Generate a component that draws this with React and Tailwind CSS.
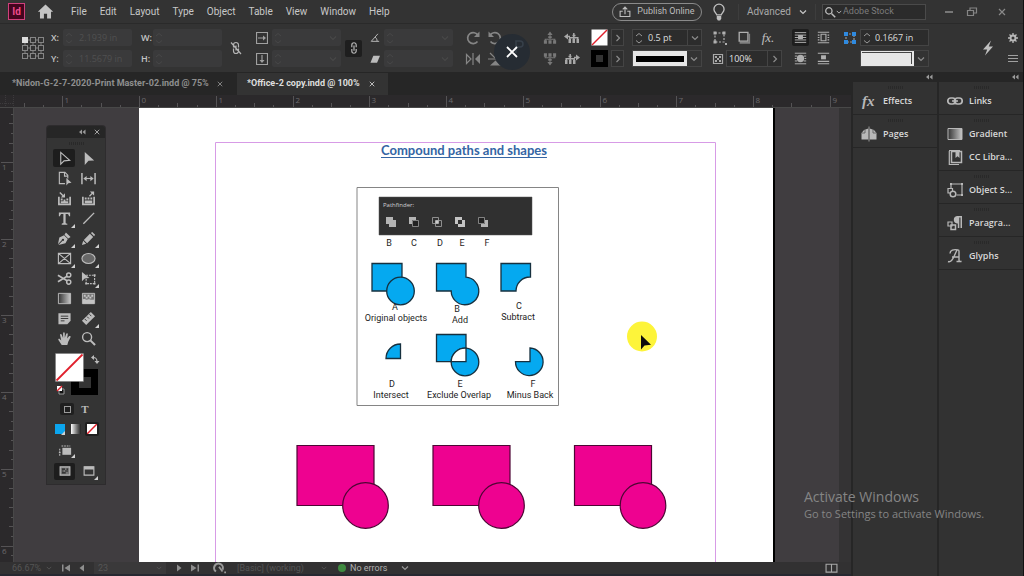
import React from 'react';

const LINE = { fill: 'none', stroke: 'currentColor', strokeWidth: 1.2 };

function Icon({ children, className = 'size-4 text-[#b4b4b4]', box = 16 }) {
  return (
    <svg viewBox={`0 0 ${box} ${box}`} className={`block shrink-0 ${className}`} aria-hidden="true">
      {children}
    </svg>
  );
}

const Chevron = ({ className = 'size-2 text-[#8c8c8c]' }) => (
  <Icon box={8} className={className}><path d="M1 2.5 4 5.5 7 2.5" {...LINE} /></Icon>
);
const ChevronRight = () => (
  <Icon box={8} className="size-2 text-[#8c8c8c]"><path d="M2.5 1 5.5 4 2.5 7" {...LINE} /></Icon>
);
const Spinner = ({ className }) => (
  <Icon box={12} className={`size-3 ${className}`}><path d="M3 4 6 1.5 9 4M3 8.5 6 11 9 8.5" {...LINE} strokeWidth="1" /></Icon>
);
const DoubleLeft = () => (
  <Icon box={8} className="size-2 text-[#9a9a9a]"><path d="M4 1.5 1 4l3 2.500zM7.500 1.500 4.500 4l3 2.500z" fill="currentColor" /></Icon>
);
const CloseX = ({ className }) => (
  <Icon box={8} className={className}><path d="M1 1 7 7M7 1 1 7" {...LINE} /></Icon>
);
const Grip = () => (
  <div className="flex h-[7px] items-center justify-center gap-px pt-1" aria-hidden="true">
    {[0, 1, 2, 3, 4, 5, 6, 7].map((n) => <span key={n} className="h-[3px] w-px bg-[#292929]" />)}
  </div>
);

/* ---------- menu bar ---------- */

const MENUS = ['File', 'Edit', 'Layout', 'Type', 'Object', 'Table', 'View', 'Window', 'Help'];

function MenuBar() {
  return (
    <header className="flex h-6 shrink-0 items-center border-b border-[#2a2a2a] bg-[#333333] pl-2 font-['Roboto',sans-serif] text-[10px] text-[#c8c8c8]">
      <div className="flex h-[17px] w-[17px] items-center justify-center border border-[#d0407c] bg-[#45041f] text-[10px] font-bold leading-none text-[#f04c8c]">Id</div>
      <button aria-label="Home" className="ml-3">
        <Icon className="size-[17px] text-[#c4c4c4]"><path d="M8 1.500.8 8.300h2V14.500h3.700V10h3v4.500h3.700V8.300h2z" fill="currentColor" /></Icon>
      </button>
      <nav className="ml-[17px] flex gap-[13px]">
        {MENUS.map((m) => <button key={m}>{m}</button>)}
      </nav>
      <div className="ml-auto flex items-center">
        <button className="flex h-[18px] w-[90px] items-center justify-center gap-[6px] rounded-full border border-[#8a8a8a] text-[9px] text-[#bdbdbd]">
          <Icon className="size-3 text-[#bdbdbd]"><path d="M5 7H1.500v7h13V7H11M8 11V1.500M5 4.500l3-3 3 3" {...LINE} strokeWidth="1.500" /></Icon>
          Publish Online
        </button>
        <button aria-label="Learn" className="ml-2">
          <Icon className="size-[18px] text-[#c0c0c0]"><path d="M6 10.500C5.500 8.800 3.500 8 3.500 5.500a4.500 4.500 0 0 1 9 0c0 2.500-2 3.300-2.500 5z" {...LINE} /><path d="M6 11.500h4v2.500l-1 1.500H7L6 14z" fill="currentColor" /></Icon>
        </button>
        <span className="ml-[10px] h-4 w-px bg-[#3d3d3d]" />
        <button className="ml-2 flex items-center gap-2 text-[#a8a8a8]">Advanced <Chevron className="size-2 text-[#c8c8c8]" /></button>
        <span className="ml-2 h-4 w-px bg-[#3d3d3d]" />
        <label className="ml-[6px] flex h-4 w-[104px] items-center border border-[#4a4a4a] bg-[#2b2b2b] pl-px">
          <Icon className="size-3 text-[#bdbdbd]"><circle cx="6.500" cy="6.500" r="4.200" {...LINE} strokeWidth="1.700" /><path d="m10 10 5 5" {...LINE} strokeWidth="2" /></Icon>
          <Chevron className="size-[6px] text-[#bdbdbd]" />
          <input aria-label="Search Adobe Stock" placeholder="Adobe Stock" className="ml-px min-w-0 flex-1 bg-transparent text-[9px] outline-none placeholder:text-[#7c7c7c]" />
        </label>
        <button aria-label="Minimize" className="ml-4 flex h-4 w-[14px] items-center"><span className="mx-auto h-[2px] w-2 bg-[#777777]" /></button>
        <button aria-label="Restore" className="ml-[10px]">
          <Icon box={12} className="h-4 w-3 text-[#858585]"><path d="M1.500 4.500h6v5h-6zM4 4.500V2h6.500v5H8" {...LINE} /></Icon>
        </button>
        <button aria-label="Close window" className="ml-4 mr-[13px] flex h-4 w-4 items-center justify-center"><CloseX className="size-2 text-[#8a8a8a]" /></button>
      </div>
    </header>
  );
}

/* ---------- control bar ---------- */

function NumField({ label, showLabel, value = '', icon, menu }) {
  return (
    <label className="flex h-[17px] items-center">
      {showLabel && <span className="w-3 text-[9px] font-semibold text-[#c4c4c4]">{label}:</span>}
      {icon && <span className="mr-1">{icon}</span>}
      <span className="flex h-full w-[69px] items-center rounded-[2px] bg-[#3a3a3b]">
        <Spinner className="text-[#474747]" />
        <input aria-label={label} defaultValue={value} className="ml-1 w-0 min-w-0 flex-1 bg-transparent text-[9px] text-[#505050] outline-none" />
        {menu && <Chevron className="mr-1 size-2 text-[#484848]" />}
      </span>
    </label>
  );
}

const Pair = ({ className = '', children }) => (
  <div className={`flex shrink-0 flex-col gap-1 ${className}`}>{children}</div>
);
const Tool = ({ label, className = 'w-4', children }) => (
  <button aria-label={label} className={`flex h-[17px] items-center justify-center ${className}`}>{children}</button>
);
const FlyButton = ({ label }) => (
  <button aria-label={label} className="flex h-[17px] w-[13px] items-center justify-center border border-[#444444] bg-[#2e2e2e]"><ChevronRight /></button>
);

const Tree = ({ turn }) => (
  <g transform={turn}>
    <path d="M8 10V3M2.500 13V9.500h11V13" {...LINE} />
    <path d="M5 4.500 8 .5l3 4zM6 6h4v2H6z" fill="currentColor" />
    <path d="M1 10.500h3.500v4H1zM6.200 10.500h3.600v4H6.200zM11.500 10.500H15v4h-3.500z" fill="currentColor" />
  </g>
);
const SideTree = ({ turn }) => (
  <g transform={turn}>
    <path d="M0 6.500 4 3.500v6zM4.500 9h2.500v4H4.500zM8.500 9H11v4H8.500zM12.500 9H15v4h-2.500z" fill="currentColor" />
    <path d="M3 6.500h3M5.800 10V7.800h8V10M9.800 10V3M8.500 5.500h3" {...LINE} strokeWidth="1.500" />
  </g>
);

function ControlBar() {
  return (
    <section aria-label="Control" className="flex h-12 shrink-0 items-center overflow-hidden bg-[#333333] pl-[22px]">
      <Icon box={22} className="size-[22px] text-[#808080]">
        <path d="M3 3h16v16H3zM3 11h16M11 3v16" {...LINE} strokeWidth="1" />
        {[0, 8, 16].map((y) => [0, 8, 16].map((x) => (
          <rect key={`${x}-${y}`} x={x + 0.5} y={y + 0.5} width="5" height="5" fill={x + y ? '#333333' : '#dddddd'} stroke={x + y ? '#858585' : '#dddddd'} />
        )))}
      </Icon>
      <Pair className="ml-[7px]">
        <NumField label="X" showLabel value="2.1939 in" />
        <NumField label="Y" showLabel value="11.5679 in" />
      </Pair>
      <Pair className="ml-[9px]">
        <NumField label="W" showLabel />
        <NumField label="H" showLabel />
      </Pair>
      <button aria-label="Constrain proportions" className="ml-[6px]">
        <Icon><path d="M5.500 7.500V5a2.500 2.500 0 0 1 5 0v2.500M5.500 8.500V11a2.500 2.500 0 0 0 5 0V8.500M8 5.500v5M3 2.500l10 11.500" {...LINE} /></Icon>
      </button>
      <Pair className="ml-3">
        <NumField label="Scale X" menu icon={<Icon box={12} className="size-3 text-[#a0a0a0]"><path d="M.5.5h11v11H.5zM2 6h6" {...LINE} /><path d="M7 3.500 10 6 7 8.500z" fill="currentColor" /></Icon>} />
        <NumField label="Scale Y" menu icon={<Icon box={12} className="size-3 text-[#a0a0a0]"><path d="M.5.5h11v11H.5zM6 2v6" {...LINE} /><path d="M3.500 7 6 10 8.500 7z" fill="currentColor" /></Icon>} />
      </Pair>
      <button aria-label="Link scale" className="ml-1 flex h-[17px] w-[17px] items-center justify-center rounded-[2px] bg-[#1e1e1e]">
        <Icon className="size-[14px] text-[#b4b4b4]"><path d="M5.500 7V4.500a2.500 2.500 0 0 1 5 0V7M5.500 9v2.500a2.500 2.500 0 0 0 5 0V9M8 5v6" {...LINE} strokeWidth="1.400" /></Icon>
      </button>
      <Pair className="ml-2">
        <NumField label="Rotation angle" menu icon={<Icon box={12} className="size-[10px] text-[#b4b4b4]"><path d="M9.500 1 1.500 10H11M6 5c1.800 1 2.500 2.500 2.500 5" {...LINE} /></Icon>} />
        <NumField label="Shear angle" menu icon={<Icon box={12} className="size-[10px] text-[#bcbcbc]"><path d="M4 2h8L8.500 10.500h-8z" fill="currentColor" /></Icon>} />
      </Pair>
      <Pair className="ml-3">
        <Tool label="Rotate clockwise"><Icon className="size-4 text-[#858585]"><path d="M12.500 11.500a5.500 5.500 0 1 1 .5-6" {...LINE} strokeWidth="1.700" /><path d="M14.500 1.500V7H9z" fill="currentColor" /></Icon></Tool>
        <Tool label="Flip horizontal"><Icon className="size-4 text-[#858585]"><path d="M1.500 3.500 6 8l-4.500 4.500zM8 2v12" {...LINE} /><path d="M15 3v10L10 8z" fill="currentColor" /></Icon></Tool>
      </Pair>
      <Pair className="ml-[6px]">
        <Tool label="Rotate counterclockwise"><Icon className="size-4 text-[#858585]"><path d="M3.500 11.500a5.500 5.500 0 1 0-.5-6" {...LINE} strokeWidth="1.700" /><path d="M1.500 1.500V7H7z" fill="currentColor" /></Icon></Tool>
        <Tool label="Flip vertical"><Icon className="size-4 text-[#858585]"><path d="M3 2l4.500 4.500L13 2M1 8h14" {...LINE} /><path d="M3 14.500h11L8.500 9.500z" fill="currentColor" /></Icon></Tool>
      </Pair>
      <button aria-label="Dismiss" className="-ml-[9px] mt-2 flex h-9 w-9 shrink-0 items-center justify-center rounded-full bg-[#262c33]">
        <Icon box={36} className="size-9 text-white"><path d="M22 19V7h4a3 3 0 0 1 0 6h-4" fill="none" stroke="#37404a" strokeWidth="1.500" /><path d="M13 13l10 10M23 13 13 23" {...LINE} strokeWidth="1.800" /></Icon>
      </button>
      <Pair className="ml-3">
        <Tool label="Select container"><Icon className="size-[14px] text-[#787878]"><Tree /></Icon></Tool>
        <Tool label="Select content"><Icon className="size-[14px] text-[#787878]"><Tree turn="rotate(180 8 8)" /></Icon></Tool>
      </Pair>
      <Pair className="ml-[6px]">
        <Tool label="Previous object"><Icon className="size-4 text-[#a8a8a8]"><SideTree /></Icon></Tool>
        <Tool label="Next object"><Icon className="size-4 text-[#a8a8a8]"><SideTree turn="matrix(-1 0 0 1 16 0)" /></Icon></Tool>
      </Pair>
      <Pair className="ml-[11px]">
        <div className="flex gap-[3px]">
          <button aria-label="Fill none"><Icon box={17} className="size-[17px]"><path d="M.5.5h16v16H.5z" fill="#fff" /><path d="M1 16 16 1" stroke="#e0202c" strokeWidth="1.500" /></Icon></button>
          <FlyButton label="Fill options" />
        </div>
        <div className="flex gap-[3px]">
          <button aria-label="Stroke black" className="flex h-[17px] w-[17px] items-center justify-center bg-black"><span className="size-[7px] bg-[#333333]" /></button>
          <FlyButton label="Stroke options" />
        </div>
      </Pair>
      <Pair className="ml-2">
        <label className="flex h-[17px] w-[70px] items-center border border-[#444444] bg-[#2c2c2c]">
          <Spinner className="text-[#999999]" />
          <input aria-label="Stroke weight" defaultValue="0.5 pt" className="ml-[3px] w-0 flex-1 bg-transparent text-[9px] text-[#dddddd] outline-none" />
          <span className="flex h-full w-[14px] items-center justify-center border-l border-[#444444]"><Chevron /></span>
        </label>
        <button aria-label="Stroke type" className="flex h-[17px] w-[70px] border border-[#444444]">
          <span className="flex h-full flex-1 items-center bg-[#e6e6e6] px-[3px]"><span className="h-[6px] w-full bg-black" /></span>
          <span className="flex h-full w-[14px] items-center justify-center"><Chevron /></span>
        </button>
      </Pair>
      <div className="ml-[10px] flex shrink-0 flex-col gap-1">
        <div className="flex items-center gap-2">
          <Tool label="Corner options"><Icon className="size-4 text-[#b0b0b0]"><path d="M3 3h9v9H3z" {...LINE} strokeDasharray="2 1.500" /><path d="M1.500 1.500h3v3h-3zM10.500 1.500h3v3h-3zM1.500 10.500h3v3h-3zM13 13h2v2h-2z" fill="currentColor" /></Icon></Tool>
          <Tool label="Drop shadow"><Icon className="size-[14px] text-[#b0b0b0]"><path d="M2.500 1.500h10v10h-10z" {...LINE} strokeWidth="1.500" /><path d="M3 13.500h11V3" {...LINE} stroke="#808080" strokeWidth="2" /></Icon></Tool>
          <Tool label="Effects"><span className="font-['Liberation_Serif',serif] text-[13px] italic leading-none text-[#c0c0c0]">fx.</span></Tool>
        </div>
        <div className="flex items-center gap-px">
          <Icon box={12} className="mr-px size-3 text-[#a8a8a8]"><path d="M1.500 1.500h9v9h-9z" {...LINE} /><path d="M3 3h2v2H3zM7 3h2v2H7zM5 5h2v2H5zM3 7h2v2H3zM7 7h2v2H7z" fill="currentColor" /></Icon>
          <label className="flex h-[17px] w-[56px] items-center border border-[#444444] bg-[#2c2c2c]">
            <input aria-label="Opacity" defaultValue="100%" className="ml-[2px] w-0 flex-1 bg-transparent text-[9px] text-[#e2e2e2] outline-none" />
            <span className="flex h-full w-[14px] items-center justify-center border-l border-[#444444]"><ChevronRight /></span>
          </label>
        </div>
      </div>
      <Pair className="ml-[10px]">
        <Tool label="No text wrap" className="w-[17px] rounded-[2px] bg-[#1e1e1e]"><Icon className="size-[13px] text-[#b0b0b0]"><path d="M1 2h14M1 5h14M1 8h14M1 11h14M1 14h14" {...LINE} /><path d="M5 5h6v5H5z" fill="currentColor" /></Icon></Tool>
        <Tool label="Wrap around shape" className="w-[17px]"><Icon className="size-[13px] text-[#b0b0b0]"><path d="M1 1.500h14M1 5h3M12 5h3M1 8h2M13 8h2M1 11h3M12 11h3M1 14.500h14" {...LINE} /><circle cx="8" cy="8" r="4.500" fill="currentColor" /></Icon></Tool>
      </Pair>
      <Pair className="ml-[6px]">
        <Tool label="Wrap bounding box" className="w-[17px]"><Icon className="size-[13px] text-[#b0b0b0]"><path d="M1 1.500h14M1 5h2M13 5h2M1 8h2M13 8h2M1 11h2M13 11h2M1 14.500h14M5 4h6v8H5z" {...LINE} strokeWidth="1.400" /></Icon></Tool>
        <Tool label="Jump object" className="w-[17px]"><Icon className="size-[13px] text-[#b0b0b0]"><path d="M1 1.500h14M1 11.500h14M1 14.500h14" {...LINE} strokeWidth="1.400" /><path d="M5 4h6v5H5z" fill="currentColor" /></Icon></Tool>
      </Pair>
      <div className="ml-3 flex shrink-0 flex-col items-end gap-1">
        <label className="flex h-[17px] items-center gap-1">
          <Icon box={12} className="size-3 text-[#2f8ae0]"><path d="M2 2h8v8H2z" {...LINE} stroke="#999999" strokeDasharray="2 1" /><path d="M0 0h4v4H0zM8 0h4v4H8zM0 8h4v4H0zM8 8h4v4H8z" fill="currentColor" /></Icon>
          <span className="flex h-full w-[69px] items-center border border-[#444444] bg-[#2c2c2c]">
            <Spinner className="text-[#999999]" />
            <input aria-label="Corner size" defaultValue="0.1667 in" className="ml-[2px] w-0 flex-1 bg-transparent text-[9px] text-[#dddddd] outline-none" />
          </span>
        </label>
        <button aria-label="Corner shape" className="flex h-[17px] w-[69px] border border-[#444444]">
          <span className="h-full flex-1 bg-[#e6e6e6] p-px pr-[2px]"><span className="block h-3 border-r border-t border-[#444444]" /></span>
          <span className="flex h-full w-[14px] items-center justify-center"><Chevron /></span>
        </button>
      </div>
      <div className="ml-auto mr-[5px] flex items-center gap-3">
        <button aria-label="Quick apply"><Icon className="size-4 text-[#c0c0c0]"><path d="M11 .5 3 9.500h4.200L5 15.500l8-9H8.800z" fill="currentColor" /></Icon></button>
        <Pair>
          <Tool label="Settings" className="w-[10px]"><Icon box={12} className="size-[10px] text-[#b8b8b8]"><circle cx="6" cy="6" r="3" {...LINE} strokeWidth="2.200" /><path d="M6 0v12M0 6h12M1.800 1.800l8.400 8.400M10.200 1.800l-8.400 8.400" {...LINE} strokeWidth="1.600" /><circle cx="6" cy="6" r="1.800" fill="#333333" /></Icon></Tool>
          <Tool label="Panel menu" className="w-[10px]"><Icon box={10} className="size-[10px] text-[#a0a0a0]"><path d="M0 1.500h10M0 4.500h10M0 7.500h10" {...LINE} strokeWidth="1" /></Icon></Tool>
        </Pair>
      </div>
    </section>
  );
}

/* ---------- rulers and document tabs ---------- */

const INCH = 76.75;

function DocumentTabs() {
  return (
    <div className="flex h-[23px] shrink-0 items-stretch whitespace-nowrap bg-[#262626] pt-px font-['Roboto',sans-serif] text-[9px] font-bold">
      <div className="flex w-[237px] shrink-0 items-center justify-between pl-3 pr-[14px] text-[#8f8f8f]">
        <button>*Nidon-G-2-7-2020-Print Master-02.indd @ 75%</button>
        <button aria-label="Close Nidon tab"><CloseX className="size-[6px] text-[#8a8a8a]" /></button>
      </div>
      <div className="flex w-[151px] shrink-0 items-center justify-between bg-[#333333] pl-[10px] pr-[13px] text-[#dedede]">
        <button>*Office-2 copy.indd @ 100%</button>
        <button aria-label="Close Office tab"><CloseX className="size-[6px] text-[#c8c8c8]" /></button>
      </div>
    </div>
  );
}

function HorizontalRuler() {
  const ticks = [];
  for (let q = -6; q <= 36; q += 1) {
    const x = Math.round(139 + (q * INCH) / 4) + 0.5;
    const len = q % 4 === 0 ? 12 : q % 2 === 0 ? 5 : 3;
    ticks.push(<path key={q} d={`M${x} ${13 - len}V13`} stroke="#555355" />);
    if (q % 4 === 0) ticks.push(<text key={`t${q}`} x={x + 2} y="8" fontSize="8" fill="#6c6a6c">{Math.abs(q / 4)}</text>);
  }
  return (
    <div className="h-[13px] shrink-0 overflow-hidden border-b border-[#484848] bg-[#2b292b]">
      <svg width="840" height="13" className="block" aria-hidden="true">
        <path d="M13.500 0V13M0 8.500H13M5.500 0V13" stroke="#3c3a3c" strokeDasharray="1 1" />
        {ticks}
      </svg>
    </div>
  );
}

function VerticalRuler() {
  const ticks = [];
  for (let e = 3; e <= 49; e += 1) {
    const y = Math.round(-23 + (e * INCH) / 8) + 0.5;
    const len = e % 8 === 0 ? 12 : e % 2 === 0 ? 4 : 2;
    ticks.push(<path key={e} d={`M${13 - len} ${y}H13`} stroke="#555355" />);
    if (e % 8 === 0) ticks.push(<text key={`t${e}`} x="2" y={y + 7} fontSize="8" fill="#6c6a6c">{e / 8}</text>);
  }
  return (
    <div className="w-[14px] shrink-0 overflow-hidden border-r border-[#484848] bg-[#2b292b]">
      <svg width="13" height="454" className="block" aria-hidden="true">{ticks}</svg>
    </div>
  );
}

/* ---------- tools panel ---------- */

const Corner = () => (
  <Icon box={4} className="absolute -bottom-px right-0 size-1 text-[#d0d0d0]"><path d="M4 0v4H0z" fill="currentColor" /></Icon>
);

const TOOLS = [
  ['Selection', false, <path d="M4 1.500v12.500l3.500-3.500 6-.5z" {...LINE} />],
  ['Direct selection', false, <path d="M4 1v14l4-4.500 6-.5z" fill="currentColor" />],
  ['Page', false, <><path d="M8.500 13.500H2.500v-12h6l3 3V8M8 2v3.500h3.500" {...LINE} /><path d="M10 7.500v8l2-2.500 3.500-.5z" fill="currentColor" /></>],
  ['Gap', false, <><path d="M1 2v12M15 2v12" {...LINE} strokeWidth="1.600" /><path d="M4 8h8" {...LINE} /><path d="M2.500 8 6 5.200v5.600zM13.500 8 10 5.200v5.600z" fill="currentColor" /></>],
  ['Content collector', false, <><path d="M2 6v8.200h12V6" {...LINE} strokeWidth="1.800" /><path d="M4 8h2v2H4zM10 8h2v2h-2zM7 9h2v2H7zM4 11h8v2H4z" fill="currentColor" /><path d="m3 1.500 3.500 3.500" {...LINE} strokeWidth="1.500" /><path d="M8.500 2.500v4.500h-4.500z" fill="currentColor" /></>],
  ['Content placer', false, <><path d="M2 6v8.200h12V6" {...LINE} strokeWidth="1.800" /><path d="M4 7h2v2H4zM7 7h2v2H7zM10 7h2v2h-2zM4 10h8v3H4z" fill="currentColor" /><path d="m9 5.500 3.500-3.500" {...LINE} strokeWidth="1.500" /><path d="M9.500.5H14V5z" fill="currentColor" /></>],
  ['Type', true, <path d="M2 1.500h12V5.500h-1.200C12.500 4 12 3.300 10.500 3.300H9.200v9c0 1 .5 1.200 1.800 1.300v1H5v-1c1.300-.1 1.800-.3 1.800-1.300v-9H5.500C4 3.300 3.500 4 3.200 5.500H2z" fill="currentColor" />],
  ['Line', false, <path d="M2.500 13.500 14 2" {...LINE} strokeWidth="1.500" />],
  ['Pen', true, <path d="M9.500 1.500 14.500 6.500l-2.500 1.500-4-4zM7.500 4.500l4 4-2.500 4.500-7.500 2L6 10.500a1.200 1.200 0 1 0-.8-.8L1 14l1.500-7z" fill="currentColor" />],
  ['Pencil', true, <path d="m10.500 2 1.500-1 3 3-1 1.500zM9.500 3l3.500 3.500-6.500 6.500L3 9.500zM2.300 10.500l3.200 3.200L1 15z" fill="currentColor" />],
  ['Rectangle frame', true, <path d="M1.500 2.500h13v11h-13zM1.500 2.500l13 11M14.500 2.500l-13 11" {...LINE} />],
  ['Ellipse', true, <ellipse cx="8" cy="8" rx="7" ry="5.300" fill="#686868" stroke="currentColor" strokeWidth="1.200" />],
  ['Scissors', false, <><circle cx="12.500" cy="4.200" r="2.200" {...LINE} strokeWidth="1.600" /><circle cx="12.500" cy="11.800" r="2.200" {...LINE} strokeWidth="1.600" /><path d="M10.800 5.500 1 11.500M10.800 10.500 1 4.500" {...LINE} strokeWidth="1.800" /></>],
  ['Free transform', true, <><path d="M5.500 4.500h9v9h-9z" {...LINE} strokeDasharray="2 1" /><path d="M13.500 3.500h2v2h-2zM4.500 12.500h2v2h-2zM13.500 12.500h2v2h-2z" fill="currentColor" /><path d="M1 1v10l3-3 5-.5z" fill="currentColor" /></>],
  ['Gradient swatch', false, <path d="M1.500 2.500h13v11h-13z" fill="url(#grey-fade)" stroke="currentColor" />],
  ['Gradient feather', false, <><path d="M1.500 2.500h13v11h-13z" fill="#777777" stroke="currentColor" /><path d="M3 4h2v2H3zM7 4h2v2H7zM11 4h2v2h-2zM5 6h2v2H5zM9 6h2v2H9zM2 9c2-1.500 3 1 5 0s3 1 7 0v4.500H2z" fill="#c4c4c4" /></>],
  ['Note', false, <><path d="M1.500 2.500h13v8l-3.500 3.500H1.500z" fill="currentColor" /><path d="M4 5.500h8M4 8h8M4 10.500h4" stroke="#333333" /></>],
  ['Measure', true, <><path d="M10.500 1 15 5.500 5.500 15 1 10.500z" fill="currentColor" /><path d="m4 8.500 2 2M6.500 6l2 2M9 3.500l2 2" stroke="#333333" /></>],
  ['Hand', false, <path d="M5 15 1.500 9.500c-.5-1 .8-1.800 1.700-.8L4.500 10 3.300 4.500c-.3-1.300 1.400-1.700 1.800-.4L6.500 7.500V2.300c0-1.400 1.800-1.400 1.800 0V7.200L9.800 3c.4-1.200 2-.8 1.700.5L10.800 8l2-2.300c.9-1 2.200-.1 1.600 1L12 11.500 11 15z" fill="currentColor" />],
  ['Zoom', false, <><circle cx="6.500" cy="6.500" r="4.800" {...LINE} strokeWidth="1.500" /><path d="m10 10 5 5" {...LINE} strokeWidth="2.200" /></>],
];

function ToolsPanel() {
  return (
    <aside aria-label="Tools" className="absolute left-[33px] top-[18px] w-[58px] rounded-t-[3px] bg-[#343434] pb-1 text-[#bcbcbc] shadow-[0_0_0_1px_#2e2c2e]">
      <div className="flex h-3 items-center justify-end gap-2 rounded-t-[3px] bg-[#262626] pr-[5px]">
        <DoubleLeft /><CloseX className="size-[6px] text-[#b0b0b0]" />
      </div>
      <Grip />
      <div className="mt-[3px] grid grid-cols-2 px-[5px]">
        {TOOLS.map(([name, more, art], i) => (
          <div key={name} className="flex h-5 items-center justify-center">
            <button aria-label={name} className={i === 0 ? 'relative flex h-[18px] w-[22px] items-center justify-center rounded-[2px] bg-[#1d1d1d]' : 'relative flex h-[18px] w-[22px] items-center justify-center'}>
              <Icon className="size-[15px]">{art}</Icon>
              {more && <Corner />}
            </button>
          </div>
        ))}
      </div>
      <svg viewBox="0 0 58 46" className="mt-1 block w-full" role="img" aria-label="Fill none, stroke black">
        <path d="M24 17h27v26H24zM32 25v11h12V25z" fill="#000" fillRule="evenodd" />
        <path d="M8.500 1.500h28v28h-28z" fill="#fff" stroke="#777777" strokeWidth=".5" />
        <path d="m9.500 28.500 26-26" stroke="#e0202c" strokeWidth="1.800" />
        <path d="M46 5.500c3 0 4 1 4 4.500" fill="none" stroke="#bcbcbc" strokeWidth="1.200" />
        <path d="M47 3v5l-3-2.500zM47.500 9h5L50 12z" fill="#bcbcbc" />
        <path d="M12 37h5v5h-5z" fill="#111" stroke="#999999" />
        <path d="M10 34h5v5h-5z" fill="#fff" /><path d="m10 39 5-5" stroke="#e0202c" strokeWidth="1.500" />
      </svg>
      <div className="flex h-[22px] items-center gap-1 pl-[13px]">
        <button aria-label="Formatting affects container" className="flex h-3 w-[14px] items-center justify-center rounded-[2px] bg-[#1f1f1f]"><span className="size-[7px] border border-[#9a9a9a]" /></button>
        <button aria-label="Formatting affects text" className="w-[14px] font-['Liberation_Serif',serif] text-[11px] font-bold leading-none">T</button>
      </div>
      <div className="flex h-[18px] items-center gap-1 pl-2">
        <button aria-label="Apply color" className="relative size-[10px] bg-[#0ba5ee]"><Corner /></button>
        <button aria-label="Apply gradient" className="ml-[2px] size-[10px] bg-linear-to-r from-white to-[#222222]" />
        <button aria-label="Apply none" className="flex h-[14px] w-[14px] items-center justify-center rounded-[2px] bg-[#1f1f1f]"><Icon box={10} className="size-[10px]"><path d="M0 0h10v10H0z" fill="#fff" /><path d="M0 10 10 0" stroke="#e0202c" strokeWidth="1.500" /></Icon></button>
      </div>
      <div className="flex h-6 items-center pl-[11px]">
        <button aria-label="View options" className="relative flex h-[14px] w-[17px] items-center"><Icon className="size-[14px]"><path d="M5 5.500h10v8H5z" fill="currentColor" /><path d="M4 3.500h10M2 6.500v8M1 11h3" {...LINE} strokeDasharray="2 1" /></Icon><Corner /></button>
      </div>
      <div className="flex h-[18px] items-center gap-[5px] pl-[7px]">
        <button aria-label="Normal mode" className="flex h-[17px] w-[21px] items-center justify-center rounded-[2px] bg-[#1d1d1d]"><Icon className="size-3"><path d="M1.500 2.500h13v11h-13z" fill="#777777" stroke="currentColor" strokeWidth="1.500" /><path d="M4 5.500h4M10 5.500h2M4 8h2M8 8h4M4 10.500h5" stroke="#222222" strokeWidth="1.500" /></Icon></button>
        <button aria-label="Screen mode" className="relative flex h-[15px] w-[18px] items-center justify-center"><Icon className="size-3"><path d="M1.500 2.500h13v11h-13z" {...LINE} strokeWidth="1.500" /><path d="M1.500 2h13v4h-13z" fill="currentColor" /></Icon><Corner /></button>
      </div>
    </aside>
  );
}

/* ---------- artwork on the page ---------- */

const PATHFINDER = [
  [391, <path d="M0 0h7v3h3v7H3V7H0z" fill="#b4b4b4" />],
  [414, <><path d="M0 0h7v3H3v4H0z" fill="#b4b4b4" /><path d="M3.500 3.500h6v6h-6z" fill="#222" stroke="#999" strokeWidth=".8" /></>],
  [437, <><path d="M.5.5h6v6h-6zM3.500 3.500h6v6h-6z" fill="none" stroke="#999" strokeWidth=".9" /><path d="M3.500 3.500h3v3h-3z" fill="#ccc" /></>],
  [460, <path d="M0 0h7v3h3v7H3V7H0zM3 3v4h4V3z" fill="#c4c4c4" fillRule="evenodd" />],
  [483, <><path d="M10 3v7H3V7h4V3z" fill="#b4b4b4" /><path d="M.5.5h6v6h-6z" fill="#222" stroke="#999" strokeWidth=".8" /></>],
];

const LABELS = [
  ['B', 389, 246], ['C', 414, 246], ['D', 440, 246], ['E', 462, 246], ['F', 487, 246],
  ['A', 395, 310], ['Original objects', 396, 321],
  ['B', 457, 312], ['Add', 460, 323],
  ['C', 519, 309], ['Subtract', 518, 320],
  ['D', 392, 387], ['Intersect', 391, 398],
  ['E', 460, 387], ['Exclude Overlap', 459, 398],
  ['F', 533, 387], ['Minus Back', 530, 398],
];

function Artwork() {
  return (
    <svg viewBox="139 108 634 454" width="634" height="454" className="block" role="img" aria-label="Pathfinder operations and practice shapes">
      <path d="M215.500 562V142.500H715.500V562" fill="none" stroke="#d79be6" />
      <path d="M357 187.500h201.500v218H357z" fill="#fff" stroke="#858585" />
      <path d="M379 197h153v38H379z" fill="#303030" stroke="#555" strokeWidth=".5" />
      <text x="383" y="207" fontSize="6" fill="#d0d0d0">Pathfinder:</text>
      {PATHFINDER.map(([x, art]) => <g key={x} transform={`translate(${x - 5} 217)`}>{art}</g>)}
      <g fill="#05a9f0" stroke="#16303f" strokeWidth="1.300">
        <path d="M372 263.500h30V291h-30z" /><circle cx="400.500" cy="291" r="13.800" />
        <path d="M436.500 263.500H466v13.700a13.800 13.800 0 1 1-14.800 13.800H436.500z" />
        <path d="M501 263.500h29.500V277a14 14 0 0 0-14.500 14H501z" />
        <path d="M400.500 344v14.500H386A14.500 14.500 0 0 1 400.500 344z" />
        <path d="M436.500 334.500H466v27.200h-29.500z" /><circle cx="465" cy="362" r="13.800" />
        <path d="M466 348.200v13.500h-14.800A13.800 13.800 0 0 1 466 348.200z" fill="#fff" />
        <path d="M530 348v13.700H515.500A13.800 13.800 0 1 0 530 348z" />
      </g>
      <g fontSize="9" fill="#1d1d1d" textAnchor="middle" fontFamily="Roboto, sans-serif">
        {LABELS.map(([text, x, y]) => <text key={`${text}${y}`} x={x} y={y}>{text}</text>)}
      </g>
      <g fill="#ee0290" stroke="#4d0634" strokeWidth="1.200">
        {[297, 433, 574.5].map((x) => (
          <g key={x}><path d={`M${x} 445.500h77v60h-77z`} /><circle cx={x + 68.5} cy="505.500" r="22.800" /></g>
        ))}
      </g>
      <circle cx="642" cy="336.500" r="15" fill="#fdf43a" />
      <path d="M641 335v14.500l3.500-4 6.500-.8z" fill="#0d0d0d" />
    </svg>
  );
}

function Pasteboard() {
  return (
    <main className="relative min-w-0 flex-1 overflow-hidden bg-[#403d40]">
      <article className="relative ml-[125px] h-full w-[636px] border-r-2 border-black bg-white">
        <Artwork />
        <h1 className="absolute left-[242px] top-[33px] whitespace-nowrap font-['Lato',sans-serif] text-[13px] font-bold leading-[18px] text-[#3465a4] underline underline-offset-2">Compound paths and shapes</h1>
      </article>
      <ToolsPanel />
    </main>
  );
}

/* ---------- status bar ---------- */

function StatusBar() {
  const arrow = 'h-[10px] w-[10px] text-[#8e8e8e]';
  return (
    <footer className="flex h-[14px] shrink-0 items-center border-b-2 border-[#262830] bg-[#323132] pl-3 font-['Roboto',sans-serif] text-[9px] leading-none text-[#555555]">
      <button className="flex w-10 items-center justify-between">66.67% <Chevron className="size-[6px] text-[#555555]" /></button>
      <button aria-label="First page" className="ml-[9px]"><Icon box={10} className={arrow}><path d="M1 1.500h1.500v7H1zM9 1.500v7L3.500 5z" fill="currentColor" /></Icon></button>
      <button aria-label="Previous page" className="ml-[6px]"><Icon box={10} className={arrow}><path d="M7 1.500v7L2.500 5z" fill="currentColor" /></Icon></button>
      <button aria-label="Page 23" className="ml-[7px] flex h-full w-[72px] items-center justify-between bg-[#3a393a] pl-1 pr-1">23 <Chevron className="size-[6px] text-[#555555]" /></button>
      <button aria-label="Next page" className="ml-2"><Icon box={10} className={arrow}><path d="M3 1.500v7L7.500 5z" fill="currentColor" /></Icon></button>
      <button aria-label="Last page" className="ml-[6px]"><Icon box={10} className={arrow}><path d="M7.500 1.500H9v7H7.500zM1 1.500v7L6.500 5z" fill="currentColor" /></Icon></button>
      <button aria-label="Preflight menu" className="ml-3"><Icon className="size-[14px] text-[#9a9a9a]"><path d="M4.500 12A5 5 0 1 1 12 10" {...LINE} strokeWidth="2.400" /><path d="M8 6.500 12 12M14 13h2" {...LINE} strokeWidth="2" /></Icon></button>
      <button className="ml-[11px] flex w-[90px] items-center justify-between whitespace-nowrap">[Basic] (working) <Chevron className="size-[6px] text-[#555555]" /></button>
      <button className="ml-[11px] flex items-center gap-1 text-[#b0b0b0]"><span className="size-2 rounded-full bg-[#3f8a40]" />No errors <Chevron className="ml-[10px] size-2 text-[#999999]" /></button>
      <button aria-label="Split layout" className="ml-auto mr-[13px]"><Icon box={13} className="h-3 w-[13px] text-[#a8a8a8]"><path d="M.6 2.500h11.800v8.500H.6zM6.500 2.500v8.500" {...LINE} /></Icon></button>
    </footer>
  );
}

/* ---------- docked panels ---------- */

const GLYPH = {
  Effects: <text x="1" y="12.500" fontSize="15" fontStyle="italic" fontFamily="'Liberation Serif', serif" fill="currentColor">fx</text>,
  Pages: <><path d="M7.300 2.500 3 4 .5 7v6.500h6.800zM8.700 2.500 13 4l2.500 3v6.500H8.700z" fill="currentColor" /><path d="M8 .5v15" stroke="currentColor" strokeWidth=".8" /><path d="M4 3.500V7H1M12 3.500V7h3" stroke="#555555" fill="none" strokeWidth=".8" /></>,
  Links: <><rect x=".8" y="5" width="7.800" height="6" rx="3" {...LINE} strokeWidth="1.700" /><rect x="7.400" y="5" width="7.800" height="6" rx="3" {...LINE} strokeWidth="1.700" /><path d="M5 8h6" {...LINE} strokeWidth="1.500" /></>,
  Gradient: <path d="M1 2.500h14v11H1z" fill="url(#grey-fade)" stroke="currentColor" />,
  'CC Libra...': <><path d="M4.500 2.500h10v11h-10z" {...LINE} strokeWidth="1.500" /><path d="M2.300 2v13.500H12M2 1.500h11" {...LINE} /><path d="M8.500 3h4v6l-2-1.800-2 1.800z" fill="currentColor" /></>,
  'Object S...': <><path d="M4 6.500V2h11v11H9.500" {...LINE} strokeWidth="1.200" /><path d="M3 1h2v2H3zM14 1h2v2h-2zM14 12h2v2h-2z" fill="currentColor" /><path d="M1 6.500h4.500V11H1z" {...LINE} /><circle cx="6" cy="12" r="2.800" {...LINE} strokeWidth="1.500" fill="#323232" /></>,
  'Paragra...': <><path d="M15 1v12h-1.500V2.500h-1.200V13h-1.500V8.500H10a3.800 3.800 0 0 1 0-7.500z" fill="currentColor" /><path d="M1 7h4v4H1z" {...LINE} /><path d="M4 10h4.500v4.500H4z" {...LINE} strokeWidth="1.500" /></>,
  Glyphs: <path d="M1 13.500c2.500 1 4.500-1.500 6-5L9.500 3c.8-1.500 2.500-1.500 2.500.3V12c0 1.500 1 2 2.500 1.200M5 9h7.500M11 2C6.500.8 3 2.500 3 5.500M9.500 13.500h5" {...LINE} strokeWidth="1.400" />,
};

function Dock({ groups, label }) {
  return (
    <aside aria-label={label} className="flex w-[86px] shrink-0 flex-col border-l-2 border-[#262626] bg-[#323232]">
      <div className="flex h-[10px] items-center justify-end bg-[#262626] pr-1"><DoubleLeft /></div>
      {groups.map((items) => (
        <div key={items[0]} className="border-b border-[#262626] pb-[2px]">
          <Grip />
          {items.map((name) => (
            <button key={name} className="flex h-[23px] w-full items-center gap-[6px] whitespace-nowrap pl-2 text-[9px] font-semibold text-[#d8d8d8]">
              <Icon className="size-4 text-[#b8b8b8]">{GLYPH[name]}</Icon>{name}
            </button>
          ))}
        </div>
      ))}
    </aside>
  );
}

export default function App() {
  return (
    <div className="relative flex h-screen flex-col overflow-hidden border-r border-[#111111] bg-[#333333] font-['Open_Sans','Noto_Sans',sans-serif]">
      <svg width="0" height="0" className="absolute" aria-hidden="true">
        <defs><linearGradient id="grey-fade"><stop offset="0" stopColor="#333333" /><stop offset="1" stopColor="#c8c8c8" /></linearGradient></defs>
      </svg>
      <MenuBar />
      <ControlBar />
      <div className="flex min-h-0 flex-1">
        <div className="flex min-w-0 flex-1 flex-col">
          <DocumentTabs />
          <div className="flex min-h-0 flex-1 flex-col">
            <HorizontalRuler />
            <div className="flex min-h-0 flex-1">
              <VerticalRuler />
              <Pasteboard />
              <div className="w-3 shrink-0 bg-[#343334]" />
            </div>
          </div>
          <StatusBar />
        </div>
        <Dock label="Effects and pages" groups={[['Effects'], ['Pages']]} />
        <Dock label="Panels" groups={[['Links'], ['Gradient', 'CC Libra...'], ['Object S...'], ['Paragra...'], ['Glyphs']]} />
      </div>
      <div className="pointer-events-none absolute bottom-[54px] right-[42px] w-[177px] whitespace-nowrap font-['Open_Sans',sans-serif] text-[#858585]">
        <p className="text-[14px] leading-[18px]">Activate Windows</p>
        <p className="text-[11px] leading-4">Go to Settings to activate Windows.</p>
      </div>
    </div>
  );
}
